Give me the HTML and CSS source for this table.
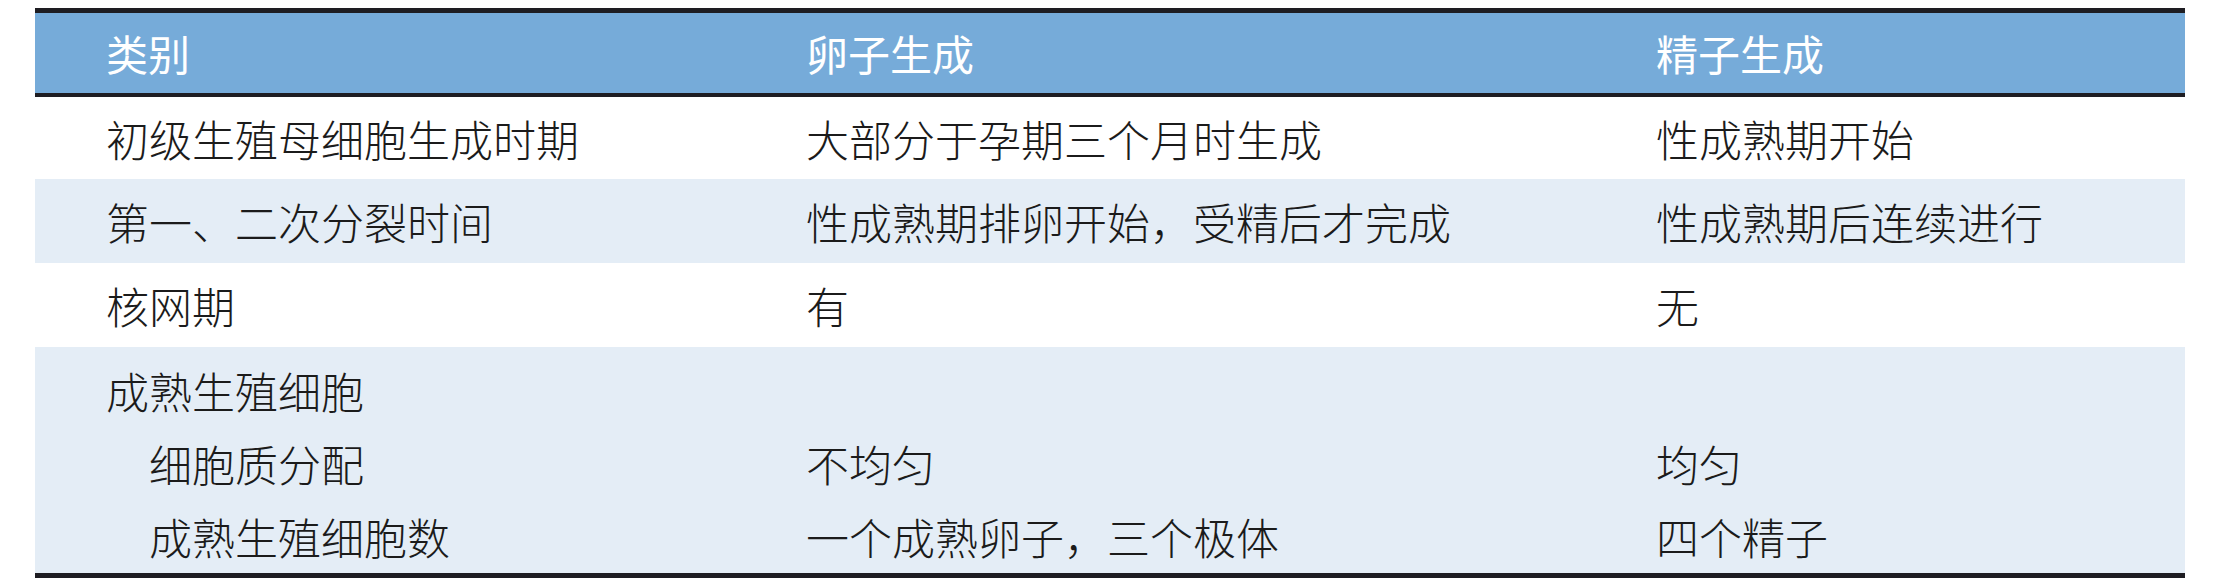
FILE: index.html
```html
<!DOCTYPE html>
<html lang="zh-CN">
<head>
<meta charset="utf-8">
<title>卵子生成与精子生成比较</title>
<link rel="stylesheet" href="styles.css">
</head>
<body>
<table class="cmp">
  <colgroup>
    <col class="c1">
    <col class="c2">
    <col class="c3">
  </colgroup>
  <thead>
    <tr>
      <th class="first">类别</th>
      <th>卵子生成</th>
      <th>精子生成</th>
    </tr>
  </thead>
  <tbody>
    <tr class="r1">
      <td class="first">初级生殖母细胞生成时期</td>
      <td>大部分于孕期三个月时生成</td>
      <td>性成熟期开始</td>
    </tr>
    <tr class="r2 alt">
      <td class="first">第一、二次分裂时间</td>
      <td>性成熟期排卵开始，受精后才完成</td>
      <td>性成熟期后连续进行</td>
    </tr>
    <tr class="r3">
      <td class="first">核网期</td>
      <td>有</td>
      <td>无</td>
    </tr>
    <tr class="sub alt top">
      <td class="first">成熟生殖细胞</td>
      <td></td>
      <td></td>
    </tr>
    <tr class="sub alt">
      <td class="first indent">细胞质分配</td>
      <td>不均匀</td>
      <td>均匀</td>
    </tr>
    <tr class="sub alt last">
      <td class="first indent">成熟生殖细胞数</td>
      <td>一个成熟卵子，三个极体</td>
      <td>四个精子</td>
    </tr>
  </tbody>
</table>
</body>
</html>
```

FILE: styles.css
```css
html, body {
  margin: 0;
  padding: 0;
  background: #ffffff;
}

body {
  padding-top: 8px;
  padding-left: 35px;
}

.cmp {
  border-collapse: separate;
  border-spacing: 0;
  width: 2150px;
  table-layout: fixed;
  font-family: "Noto Sans CJK SC", "Noto Sans", sans-serif;
}

.c1 { width: 748px; }
.c2 { width: 850px; }
.c3 { width: 552px; }

.cmp th,
.cmp td {
  padding: 0 0 0 23px;
  text-align: left;
  vertical-align: middle;
  white-space: nowrap;
}

.cmp th {
  background: #76abd9;
  color: #ffffff;
  font-weight: 400;
  font-size: 42px;
  line-height: 80px;
  border-top: 5px solid #1e1d22;
  border-bottom: 4px solid #1e1d22;
}

.cmp td {
  color: #1b1b1b;
  font-weight: 300;
  font-size: 43px;
}

.cmp .first {
  padding-left: 71px;
}

.cmp .first.indent {
  padding-left: 114px;
}

.r1 td { line-height: 82px; }
.r2 td { line-height: 84px; }
.r3 td { line-height: 84px; }

.alt td {
  background: #e4edf6;
}

.sub td {
  line-height: 73px;
}

.sub.top td {
  padding-top: 7px;
}

.sub.last td {
  border-bottom: 5px solid #1e1d22;
}
```
